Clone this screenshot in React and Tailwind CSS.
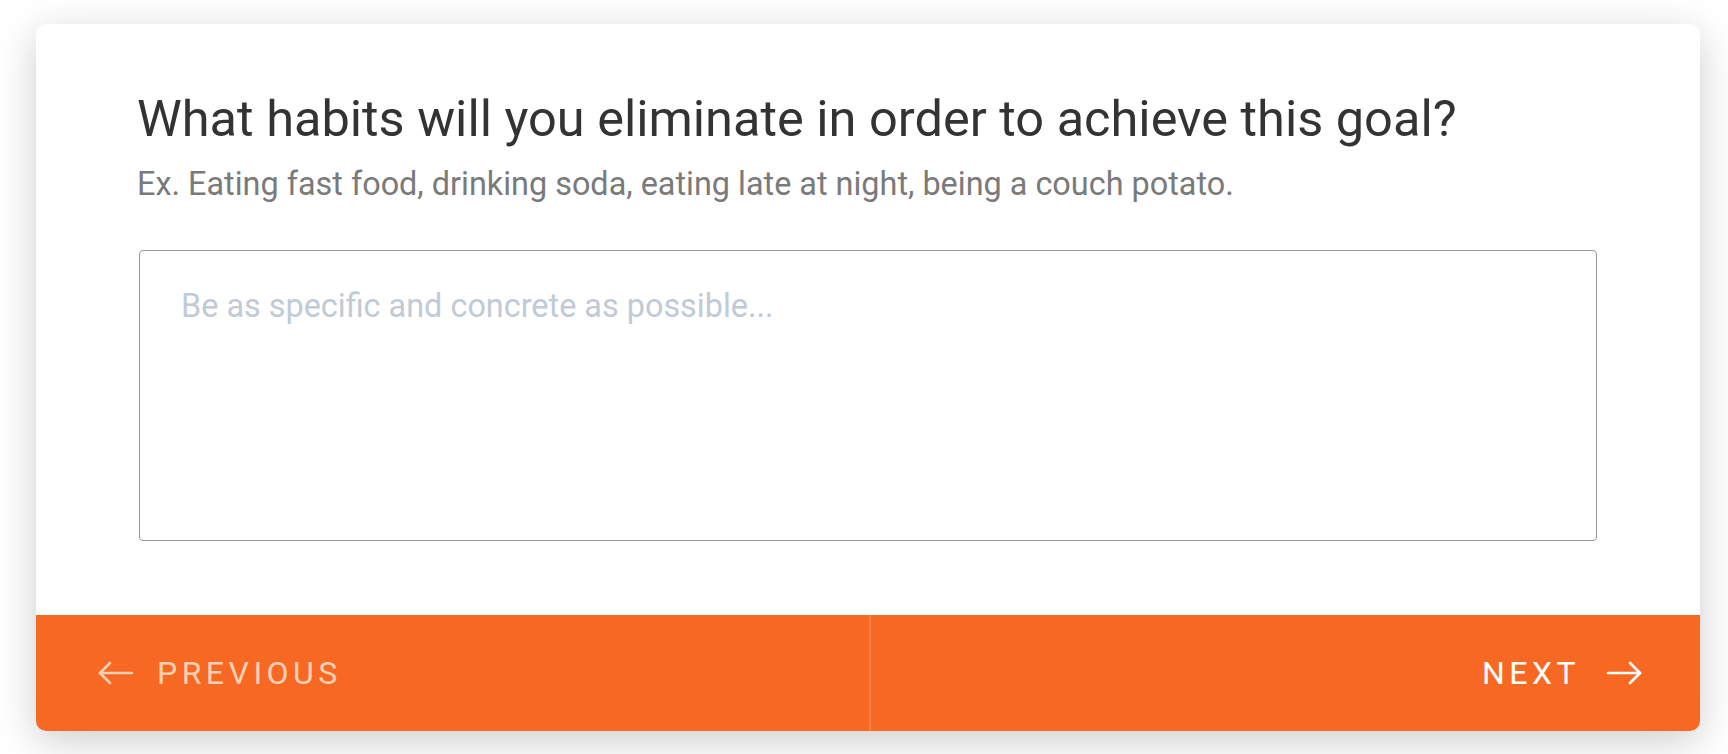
import React from "react";

function ArrowLeft() {
  return (
    <svg width="36" height="24" viewBox="0 0 36 24" fill="none" stroke="currentColor" strokeWidth="2.7" strokeLinecap="round" strokeLinejoin="round">
      <path d="M2 12 H34" />
      <path d="M12 2 L2 12 L12 22" />
    </svg>
  );
}

function ArrowRight() {
  return (
    <svg width="36" height="24" viewBox="0 0 36 24" fill="none" stroke="currentColor" strokeWidth="2.7" strokeLinecap="round" strokeLinejoin="round">
      <path d="M2 12 H34" />
      <path d="M24 2 L34 12 L24 22" />
    </svg>
  );
}

export default function App() {
  return (
    <div className="w-full min-h-[754px] bg-white pl-[36px] pr-[28px] pt-[24px] pb-[23px]" style={{ fontFamily: "Roboto, 'Noto Sans', sans-serif" }}>
      <div className="w-full rounded-[10px] bg-white shadow-[0_10px_40px_rgba(0,0,0,0.2)] overflow-hidden flex flex-col">
        <div className="px-[103px] pt-[65px] pb-[74px] flex flex-col">
          <h1 className="-ml-[2px] text-[50.5px] leading-[60px] text-[#333333] font-normal whitespace-nowrap">
            What habits will you eliminate in order to achieve this goal?
          </h1>
          <p className="-ml-[2px] mt-[15px] text-[32.4px] leading-[40px] text-[#7a7a7a] whitespace-nowrap">
            Ex. Eating fast food, drinking soda, eating late at night, being a couch potato.
          </p>
          <textarea
            className="mt-[46px] h-[291px] w-full resize-none rounded-[4px] border border-[#999999] pl-[41px] pr-[42px] pt-[35px] pb-[20px] text-[32.4px] leading-[40px] text-[#333] placeholder:text-[#c1cad6] outline-none"
            placeholder="Be as specific and concrete as possible..."
            style={{ fontFamily: "Roboto, 'Noto Sans', sans-serif" }}
          />
        </div>
        <div className="h-[116px] bg-[#f76823] flex">
          <button className="flex-1 flex items-center gap-[23px] pl-[62px] text-[#fcd0b6] border-r-2 border-[#fa8344]">
            <ArrowLeft />
            <span className="text-[32px] tracking-[0.14em] uppercase">Previous</span>
          </button>
          <button className="flex-1 flex items-center justify-end gap-[26px] pr-[58px] text-white">
            <span className="text-[32px] tracking-[0.14em] uppercase">Next</span>
            <ArrowRight />
          </button>
        </div>
      </div>
    </div>
  );
}
